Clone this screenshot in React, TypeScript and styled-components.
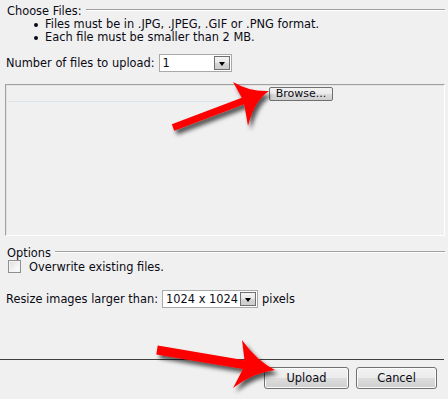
import styled, { createGlobalStyle } from "styled-components";

const GlobalStyle = createGlobalStyle`
    html, body {
        margin: 0;
        padding: 0;
        background: #f0f0f0;
    }
    body {
        font-family: "DejaVu Sans", sans-serif;
        font-size: 11.4px;
        color: #0a0a14;
    }
`

interface ButtonProps {
    width: number
}

function Select(props: { value: string, width: number }) {
    return (
        <SelectBox width={props.width}>
            <SelectValue>{props.value}</SelectValue>
            <DropButton><Caret /></DropButton>
        </SelectBox>
    )
}

function Arrows() {
    return (
        <Overlay width="448" height="399" viewBox="0 0 448 399">
            <defs>
                <filter id="shadow" x="-20%" y="-40%" width="140%" height="180%">
                    <feDropShadow dx="3" dy="4" stdDeviation="2.2" floodColor="#000" floodOpacity="0.65" />
                </filter>
            </defs>
            <path
                filter="url(#shadow)"
                fill="#ff0000"
                d="M171.8,124.2 L241.8,97.7 L233,82 Q250,92 269,91 Q254,101 248,126 L244.2,104.3 L174.2,130.8 Z"
            />
            <path
                filter="url(#shadow)"
                fill="#ff0000"
                d="M157.7,345.6 L244.5,360.3 L242,340 Q257,361 275,370 Q252,373 233,388 L243,369.1 L156.3,354.4 Z"
            />
        </Overlay>
    )
}

export default function App() {
    return (
        <Page>
            <GlobalStyle />
            <Body>
                <GroupHeader top={5}>
                    <GroupTitle>Choose Files:</GroupTitle>
                    <Rule />
                </GroupHeader>
                <Bullets>
                    <li>Files must be in .JPG, .JPEG, .GIF or .PNG format.</li>
                    <li>Each file must be smaller than 2 MB.</li>
                </Bullets>

                <FieldRow top={10}>
                    <Label>Number of files to upload:</Label>
                    <Select value="1" width={73} />
                </FieldRow>

                <FilePanel>
                    <FileRow>
                        <FilePath />
                        <SmallButton>Browse...</SmallButton>
                    </FileRow>
                </FilePanel>

                <GroupHeader top={11}>
                    <GroupTitle>Options</GroupTitle>
                    <Rule />
                </GroupHeader>
                <CheckRow>
                    <CheckBox />
                    <Label>Overwrite existing files.</Label>
                </CheckRow>

                <FieldRow top={17}>
                    <Label>Resize images larger than:</Label>
                    <Select value="1024 x 1024" width={96} />
                    <Label>pixels</Label>
                </FieldRow>
            </Body>

            <Footer>
                <Button width={85}>Upload</Button>
                <Button width={81}>Cancel</Button>
            </Footer>

            <Arrows />
        </Page>
    );
}

const Page = styled.div`
    position: relative;
    width: 448px;
    height: 399px;
    overflow: hidden;
    display: flex;
    flex-direction: column;
`

const Body = styled.div`
    display: flex;
    flex-direction: column;
    padding: 0 3px 0 5px;
`

const GroupHeader = styled.div<{ top: number }>`
    display: flex;
    align-items: flex-start;
    gap: 4px;
    height: 13px;
    line-height: 13px;
    margin-top: ${(props) => props.top}px;
    padding-left: 2px;
`

const GroupTitle = styled.span`
    white-space: nowrap;
`

const Rule = styled.div`
    flex: 1;
    margin-top: 4px;
    border-top: 1px solid #a0a0a0;
    border-bottom: 1px solid #ffffff;
`

const Bullets = styled.ul`
    margin: 0;
    padding: 0 0 0 40px;
    line-height: 13px;

    li {
        list-style: none;
        position: relative;
    }
    li::before {
        content: "";
        position: absolute;
        left: -11px;
        top: 5px;
        width: 4px;
        height: 4px;
        border-radius: 50%;
        background: #0a0a14;
    }
`

const FieldRow = styled.div<{ top: number }>`
    display: flex;
    align-items: center;
    gap: 4px;
    height: 18px;
    margin-top: ${(props) => props.top}px;
    padding-left: 1px;
`

const Label = styled.span`
    white-space: nowrap;
`

const SelectBox = styled.div<ButtonProps>`
    display: flex;
    align-items: center;
    box-sizing: border-box;
    width: ${(props) => props.width}px;
    height: 18px;
    padding: 1px;
    background: #ffffff;
    border: 1px solid #a9a9a9;
`

const SelectValue = styled.span`
    flex: 1;
    padding-left: 2px;
`

const DropButton = styled.span`
    display: flex;
    align-items: flex-end;
    justify-content: center;
    box-sizing: border-box;
    width: 16px;
    height: 14px;
    padding-bottom: 3px;
    border: 1px solid #6f6f6f;
    background: linear-gradient(#f4f4f4 0%, #e6e6e6 50%, #d6d6d6 51%, #cdcdcd 100%);
`

const Caret = styled.span`
    width: 0;
    height: 0;
    border-left: 3.5px solid transparent;
    border-right: 3.5px solid transparent;
    border-top: 4px solid #000000;
`

const FilePanel = styled.div`
    box-sizing: border-box;
    height: 152px;
    margin-top: 12px;
    padding: 1px 0 0 1px;
    border-top: 1px solid #a0a0a0;
    border-left: 1px solid #a0a0a0;
    border-right: 1px solid #ffffff;
    border-bottom: 1px solid #ffffff;
    box-shadow: inset 1px 1px 0 #e3e3e3;
`

const FileRow = styled.div`
    display: flex;
    align-items: flex-start;
    gap: 2px;
    height: 16px;
`

const FilePath = styled.div`
    width: 260px;
    height: 15px;
    border-bottom: 1px solid #dce4ee;
`

const SmallButton = styled.button`
    box-sizing: border-box;
    width: 64px;
    height: 14px;
    margin-top: 1px;
    padding: 0;
    font-family: inherit;
    font-size: 11px;
    line-height: 12px;
    color: #0a0a14;
    border: 1px solid #707070;
    border-radius: 2px;
    background: linear-gradient(#f2f2f2 0%, #ebebeb 50%, #dddddd 51%, #cfcfcf 100%);
`

const CheckRow = styled.div`
    display: flex;
    align-items: center;
    gap: 8px;
    height: 13px;
    padding-left: 3px;
`

const CheckBox = styled.span`
    box-sizing: border-box;
    width: 13px;
    height: 13px;
    border: 1px solid #8e8f8f;
    background: linear-gradient(135deg, #dcdcdc 0%, #f4f4f4 60%, #ffffff 100%);
    box-shadow: inset 0 0 0 1px #f4f4f4;
`

const Footer = styled.div`
    display: flex;
    justify-content: flex-end;
    gap: 7px;
    width: 444px;
    margin-top: 51px;
    padding: 7px 7px 0 0;
    box-sizing: border-box;
    border-top: 1px solid #3f3f3f;
`

const Button = styled.button<ButtonProps>`
    box-sizing: border-box;
    width: ${(props) => props.width}px;
    height: 22px;
    padding: 0;
    font-family: inherit;
    font-size: 11.4px;
    color: #0a0a14;
    border: 1px solid #707070;
    border-radius: 3px;
    background: linear-gradient(#f2f2f2 0%, #ebebeb 50%, #dddddd 51%, #cfcfcf 100%);
    box-shadow: inset 0 0 0 1px #fcfcfc;
`

const Overlay = styled.svg`
    position: absolute;
    top: 0;
    left: 0;
    pointer-events: none;
`
